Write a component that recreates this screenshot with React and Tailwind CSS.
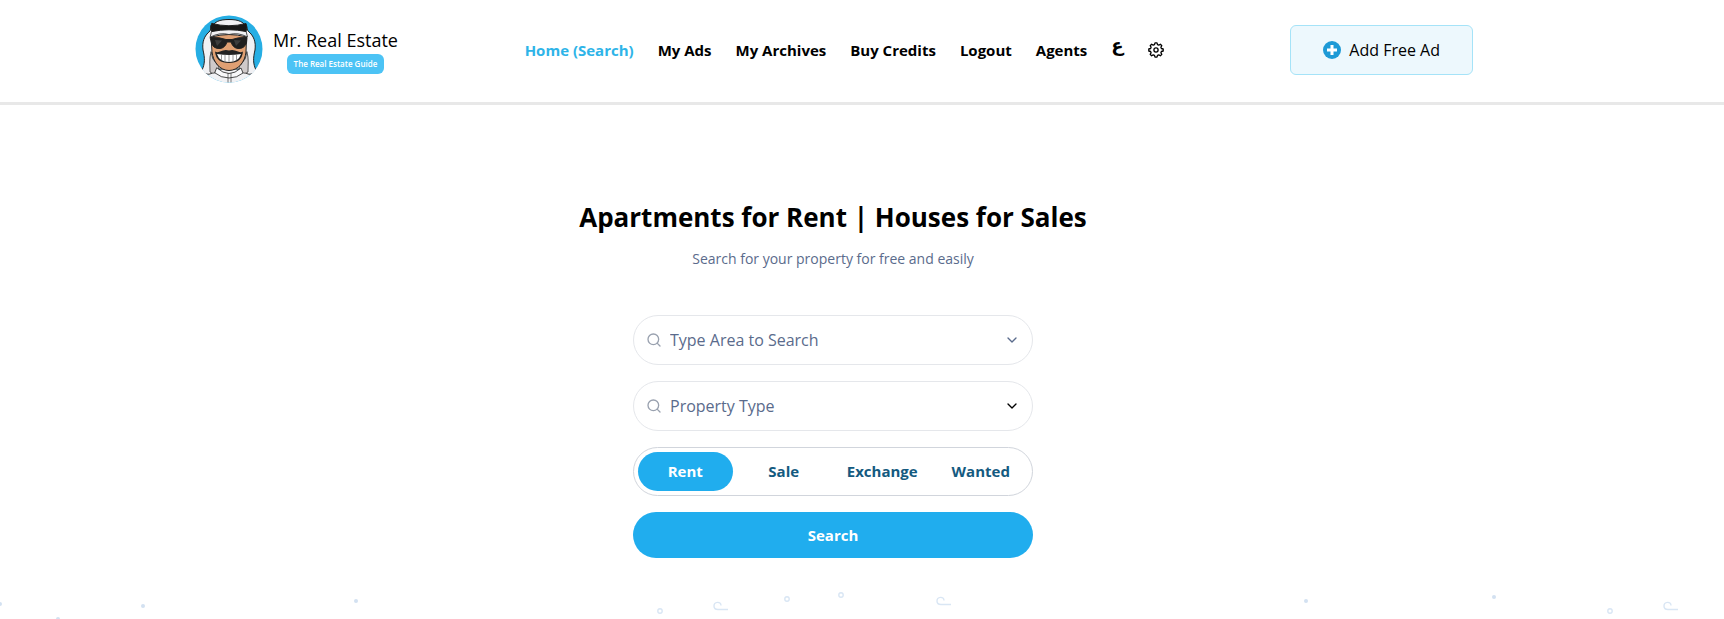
import { Search, ChevronDown } from "lucide-react";

const links = ["My Ads", "My Archives", "Buy Credits", "Logout", "Agents"];

function Avatar() {
  return (
    <svg viewBox="0 0 68 68" className="size-[68px] shrink-0" aria-hidden="true">
      <defs>
        <clipPath id="disc"><circle cx="34" cy="34" r="33.5" /></clipPath>
      </defs>
      <circle cx="34" cy="34" r="33.5" fill="#26aee4" />
      <g clipPath="url(#disc)" stroke="#222" strokeWidth="1" strokeLinejoin="round" strokeLinecap="round">
        <path d="M0 56L9 53L24 55L34 52L44 55L59 53L68 56V68H0Z" fill="#f1f1f4" stroke="none" />
        <path d="M34 4.500C25 4.500 18 6 15 16C9 21 7 27 8 35C10 43 10 49 7 55C10 60 14 60 17 58L24 54H44L51 58C54 60 58 60 61 55C58 49 58 43 60 35C61 27 59 21 53 16C50 6 43 4.500 34 4.500Z" fill="#f1f1f4" />
        <path d="M16 37C14 44 15 50 15 57C19 60 23 57 24 52L18 44Z" fill="#cfcaca" strokeWidth=".7" />
        <path d="M52 37C54 44 53 50 53 57C49 60 45 57 44 52L50 44Z" fill="#cfcaca" strokeWidth=".7" />
        <path d="M16.500 22Q34 17 51.500 22L51 37C50 47 43 55.500 34 55.500C25 55.500 18 47 17 37Z" fill="#e0a073" />
        <path d="M15.500 22Q25 17 34 19.500Q43 17 52.500 22L51 16Q34 12 17 16Z" fill="#f1f1f4" strokeWidth=".8" />
        <path d="M17 8.500Q34 13 51 8.500Q53 12 51 16.500Q34 13 17 16.500Q14 12 17 8.500Z" fill="#171717" />
        <path d="M15.500 22.500Q25 22 31 24.500H37Q43 22 52 22.500L51.500 28Q49 34 43 33.500Q38 33 36 27H32Q30 33 25 33.500Q18 34 16.500 28Z" fill="#202020" />
        <path d="M20 25L27 25.500L22 31ZM39 25L46 25.500L41 31Z" fill="#3d3d3d" stroke="none" />
        <path d="M20 36.500Q22 38 25 36.500Q30 34 34 35.500Q38 34 43 36.500Q46 38 48 36.500Q47 48 34 48Q21 48 20 36.500Z" fill="#222" stroke="none" />
        <path d="M22 39Q34 41 46 39Q43.500 47 34 47Q24.500 47 22 39Z" fill="#fff" stroke="none" />
        <path d="M26.500 40V45M30 40V46.500M34 40V46.500M38 40V46.500M41.500 40V45" fill="none" stroke="#555" strokeWidth=".6" />
        <path d="M22 53Q28 58.500 34 58.500Q40 58.500 46 53L48 58Q42 63 34 63Q26 63 20 58Z" fill="#f8f8fa" strokeWidth=".8" />
        <path d="M33 58.500V68M36 58.500V68" fill="none" strokeWidth=".6" />
      </g>
    </svg>
  );
}

function Brand() {
  return (
    <a href="#home" className="flex items-center gap-2.5 pb-0.5 pl-0.5">
      <Avatar />
      <span className="flex flex-col gap-0.5 pt-1">
        <span className="text-lg leading-6">Mr. Real Estate</span>
        <span className="mx-auto w-fit rounded-md bg-[#4cc3f5] px-[7px] text-[8px] font-semibold leading-5 text-white">
          The Real Estate Guide
        </span>
      </span>
    </a>
  );
}

function Gear() {
  return (
    <svg viewBox="0 0 16 16" className="size-4" fill="none" stroke="currentColor" strokeWidth="1.3" strokeLinejoin="round" aria-hidden="true">
      <path d="M6.500 2.600L7 .8H9L9.500 2.600L10.800 3.100L12.400 2.200L13.800 3.600L12.900 5.200L13.400 6.500L15.200 7V9L13.400 9.500L12.900 10.800L13.800 12.400L12.400 13.800L10.800 12.900L9.500 13.400L9 15.200H7L6.500 13.400L5.200 12.900L3.600 13.800L2.200 12.400L3.100 10.800L2.600 9.500L.8 9V7L2.600 6.500L3.100 5.200L2.200 3.600L3.600 2.200L5.200 3.100Z" />
      <circle cx="8" cy="8" r="2.1" />
    </svg>
  );
}

function Decoration() {
  const dots = [[143, 606], [356, 601], [1306, 601], [1494, 597], [58, 619], [0, 604]];
  const rings = [[660, 611], [787, 599], [841, 595], [1610, 611]];
  const hooks = [[714, 602], [937, 597], [1664, 602]];
  return (
    <svg viewBox="0 590 1724 29" className="mt-auto block w-full" fill="none" stroke="#d9e6f4" strokeWidth="1.4" aria-hidden="true">
      {dots.map(([x, y]) => <circle key={x} cx={x} cy={y} r="2" fill="#d3e1f1" stroke="none" />)}
      {rings.map(([x, y]) => <circle key={x} cx={x} cy={y} r="2.2" />)}
      {hooks.map(([x, y]) => (
        <path key={x} transform={`translate(${x} ${y})`} d="M7 3.500C7 -1 0 -.5 0 4C0 6 1.500 7.500 4 7.500H14" />
      ))}
    </svg>
  );
}

function Field({ id, label, chevron }) {
  return (
    <div className="grid h-[50px] items-center rounded-full border border-gray-200">
      <Search className="pointer-events-none col-start-1 row-start-1 ml-3 size-4 text-gray-400" aria-hidden="true" />
      <select id={id} aria-label={label} className="col-start-1 row-start-1 h-full w-full appearance-none rounded-full bg-transparent pl-9 pr-10 text-base text-[#5a6b8c]">
        <option>{label}</option>
      </select>
      <ChevronDown className={`pointer-events-none col-start-1 row-start-1 mr-3 size-4 justify-self-end ${chevron}`} aria-hidden="true" />
    </div>
  );
}

export default function App() {
  return (
    <div className="flex min-h-screen flex-col bg-white font-['Open_Sans',sans-serif] text-black">
      <header className="border-b-[3px] border-[#e8e8e8] pr-[58px]">
        <div className="mx-auto flex h-[102px] w-full max-w-7xl items-center justify-between pb-0.5">
          <Brand />
          <nav className="flex items-center gap-6 text-[15px] font-bold">
            <a href="#home" className="text-[#2eb4e8]">Home (Search)</a>
            {links.map((t) => <a key={t} href="#menu">{t}</a>)}
            <a href="#arabic" lang="ar" className="pb-2 font-['DejaVu_Sans',sans-serif] text-lg font-bold leading-none">ع</a>
            <button type="button" aria-label="Settings"><Gear /></button>
          </nav>
          <button type="button" className="flex h-[50px] items-center gap-2 rounded-md border border-[#a5e3f8] bg-[#edf8fd] px-8">
            <svg viewBox="0 0 18 18" className="size-[18px]" aria-hidden="true">
              <circle cx="9" cy="9" r="9" fill="#1e9ad6" />
              <path d="M9 4V14M4 9H14" stroke="#fff" strokeWidth="3" />
            </svg>
            Add Free Ad
          </button>
        </div>
      </header>
      <main className="flex flex-col items-center pr-[58px] pt-[94px] text-center">
        <h1 className="text-[26px] font-bold leading-9">Apartments for Rent | Houses for Sales</h1>
        <p className="mt-3 text-sm leading-6 text-[#5a6b8c]">Search for your property for free and easily</p>
        <form className="mt-11 flex w-full max-w-[400px] flex-col gap-4">
          <Field id="area" label="Type Area to Search" chevron="text-[#5a6b8c]" />
          <Field id="type" label="Property Type" chevron="text-black" />
          <div className="grid grid-cols-4 gap-1 rounded-full border border-gray-300 p-1 text-[15px] font-bold text-[#145a80]">
            <button type="button" className="h-[39px] rounded-full bg-[#20adee] text-white">Rent</button>
            <button type="button">Sale</button>
            <button type="button">Exchange</button>
            <button type="button">Wanted</button>
          </div>
          <button type="submit" className="h-[46px] rounded-full bg-[#20adee] text-[15px] font-bold text-white">Search</button>
        </form>
      </main>
      <Decoration />
    </div>
  );
}
